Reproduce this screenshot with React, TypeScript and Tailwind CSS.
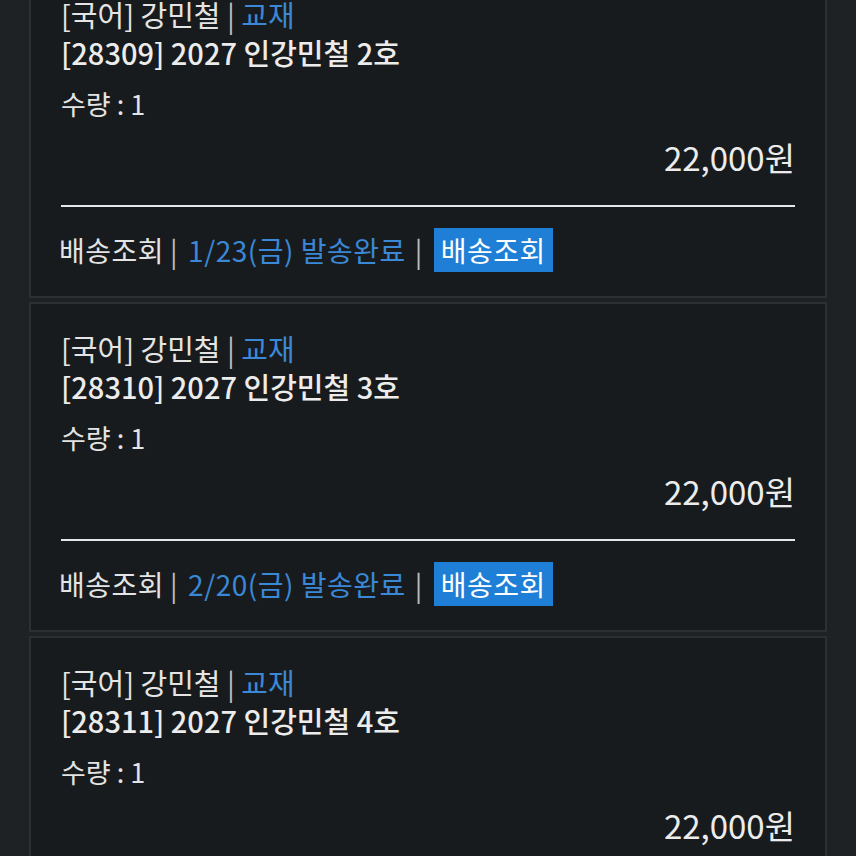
const orders = [
  { code: "28309", title: "2027 인강민철 2호", shipped: "1/23(금) 발송완료" },
  { code: "28310", title: "2027 인강민철 3호", shipped: "2/20(금) 발송완료" },
  { code: "28311", title: "2027 인강민철 4호", shipped: "3/20(금) 발송완료" },
];

const font = { fontFamily: '"Noto Sans CJK KR", "Noto Sans", sans-serif' };

function OrderCard({ code, title, shipped }: { code: string; title: string; shipped: string }) {
  return (
    <div className="border-2 border-[#2c3032] bg-[#181b1d] px-[30px] pb-[24px] pt-[25px]">
      <p className="text-[29px] leading-[38px] text-[#e4e4e4]">
        [국어] 강민철 <span className="text-[#bdbdbd]">|</span>{" "}
        <span className="text-[#3a88d6]">교재</span>
      </p>
      <p className="text-[29px] font-medium leading-[38px] text-[#ececec]">
        [{code}] {title}
      </p>
      <p className="mt-[14px] text-[27px] leading-[38px] text-[#e4e4e4]">수량 : 1</p>
      <p className="mt-[15px] text-right text-[33px] leading-[38px] text-[#ececec]">22,000원</p>
      <div className="mt-[29px] h-[2px] bg-[#e6e6e6]" />
      <div className="mt-[21px] flex items-center text-[28px] tracking-[0.5px] text-[#e4e4e4]">
        <span className="-ml-[2px]">배송조회</span>
        <span className="ml-[6px] mr-[10px] text-[#bdbdbd]">|</span>
        <span className="text-[#3a88d6]">{shipped}</span>
        <span className="ml-[9px] mr-[11px] text-[#bdbdbd]">|</span>
        <span className="flex h-[44px] items-center bg-[#1f7fd6] px-[7px] text-white">
          배송조회
        </span>
      </div>
    </div>
  );
}

export default function App() {
  return (
    <div className="h-[856px] overflow-hidden bg-[#1f2224] px-[29px]" style={font}>
      <div className="-mt-[32px] flex flex-col gap-[4px]">
        {orders.map((o) => (
          <OrderCard key={o.code} {...o} />
        ))}
      </div>
    </div>
  );
}
